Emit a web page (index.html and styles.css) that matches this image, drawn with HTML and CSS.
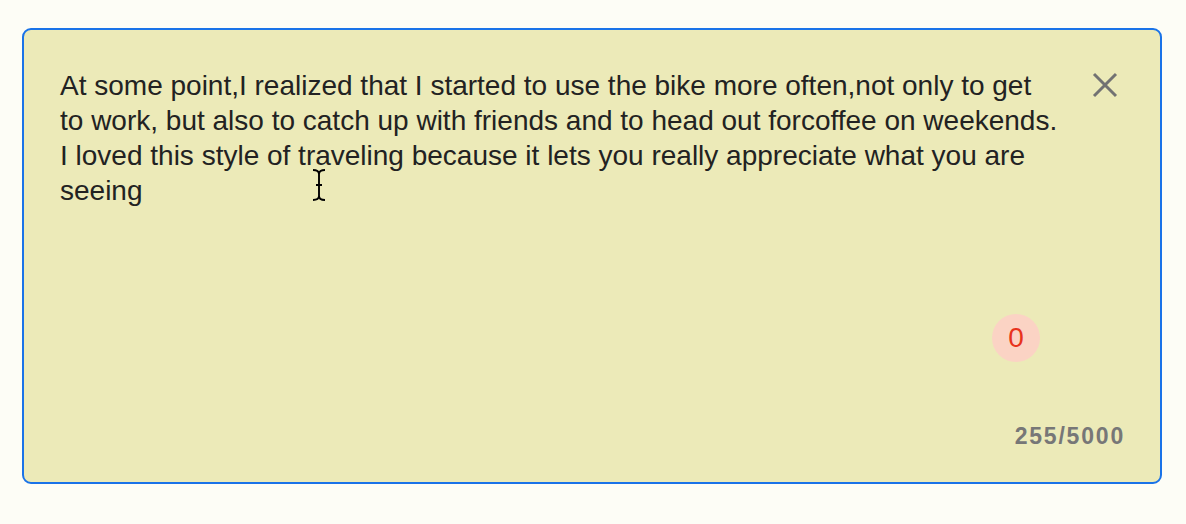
FILE: index.html
```html
<!DOCTYPE html>
<html lang="en">
<head>
<meta charset="utf-8">
<title>Note editor</title>
<link rel="stylesheet" href="styles.css">
</head>
<body>
<div class="page">
  <div class="editor">
    <div class="top">
      <p class="text">At some point,I realized that I started to use the bike more often,not only to get to work, but also to catch up with friends and to head out forcoffee on weekends. I loved this style of traveling because it lets you really appreciate what you are seeing</p>
      <button class="close" aria-label="Close">
        <svg width="26" height="26" viewBox="0 0 26 26"><path d="M2 2 L24 24 M24 2 L2 24" stroke="#727272" stroke-width="3" fill="none"/></svg>
      </button>
    </div>
    <div class="badge-row"><span class="badge">0</span></div>
    <div class="count">255/5000</div>
    <svg class="cursor" width="18" height="34" viewBox="0 0 18 34"><path d="M3 2 Q9 2 9 6 Q9 2 15 2 M9 6 V28 M6 17 H12 M3 32 Q9 32 9 28 Q9 32 15 32" stroke="#000" stroke-width="1.9" fill="none"/></svg>
  </div>
</div>
</body>
</html>
```
FILE: styles.css
```css
html, body {
  margin: 0;
  padding: 0;
  background: #fdfdf6;
}
.page {
  width: 1186px;
  height: 524px;
  padding: 28px 0 0 22px;
  box-sizing: border-box;
}
.editor {
  position: relative;
  width: 1140px;
  height: 456px;
  box-sizing: border-box;
  border: 2px solid #1a73e8;
  border-radius: 9px;
  background: #eceab8;
  padding: 38px 35px 0 36px;
  display: flex;
  flex-direction: column;
  font-family: "Liberation Sans", Arial, sans-serif;
}
.top {
  display: flex;
  align-items: flex-start;
  justify-content: space-between;
  padding-right: 7px;
}
.text {
  margin: 0;
  width: 1000px;
  font-size: 28px;
  line-height: 35px;
  color: #222;
}
.close {
  margin: 4px 0 0 0;
  padding: 0;
  border: 0;
  background: none;
  width: 26px;
  height: 26px;
  display: flex;
}
.badge-row {
  display: flex;
  justify-content: flex-end;
  padding-right: 85px;
  margin-top: 106px;
}
.badge {
  width: 48px;
  height: 48px;
  border-radius: 50%;
  background: #fbd3c4;
  color: #e8331c;
  font-size: 28px;
  line-height: 48px;
  text-align: center;
}
.count {
  margin-top: 62px;
  align-self: flex-end;
  font-size: 23px;
  font-weight: bold;
  letter-spacing: 1.8px;
  color: #777;
  line-height: 24px;
}
.cursor {
  position: absolute;
  left: 286px;
  top: 138px;
}
```
